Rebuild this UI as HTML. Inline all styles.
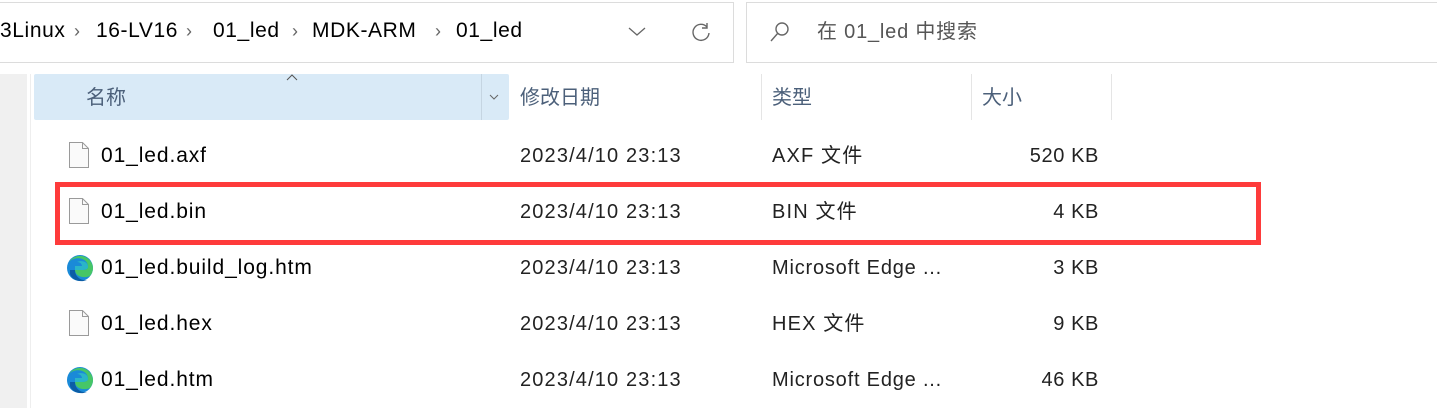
<!DOCTYPE html>
<html><head><meta charset="utf-8"><style>
body{margin:0;width:1437px;height:408px;background:#fff;position:relative;overflow:hidden;font-family:"Liberation Sans","Noto Sans CJK SC",sans-serif;color:#000}
.a{position:absolute}
.t{position:absolute;font-size:20px;line-height:24px;white-space:nowrap;letter-spacing:1px}
.h{color:#4c607a;letter-spacing:0}
.g{color:#222;letter-spacing:1.15px}
.n{font-size:21px;letter-spacing:0.9px}
.b{font-size:21px;top:19px;letter-spacing:0.6px}
.s{color:#666;font-size:18px;top:19px;letter-spacing:0}
</style></head><body>
<div class="a" style="left:-2px;top:2px;width:734px;height:59px;border:1px solid #dcdcdc"></div>
<div class="t b" style="left:0">3Linux</div><div class="t s" style="left:74px">›</div>
<div class="t b" style="left:96px">16-LV16</div><div class="t s" style="left:186px">›</div>
<div class="t b" style="left:213px">01_led</div><div class="t s" style="left:292px">›</div>
<div class="t b" style="left:312px">MDK-ARM</div><div class="t s" style="left:435px">›</div>
<div class="t b" style="left:456px">01_led</div>
<svg class="a" style="left:628px;top:26px" width="18" height="12"><path d="M1 2l8 7 8-7" fill="none" stroke="#666" stroke-width="1.3"/></svg>
<svg class="a" style="left:690px;top:21px" width="22" height="22"><path d="M17 6A8 8 0 1 0 19 12" fill="none" stroke="#666" stroke-width="1.4"/><path d="M17 2v5h-5" fill="none" stroke="#666" stroke-width="1.4"/></svg>
<div class="a" style="left:746px;top:2px;width:700px;height:59px;border:1px solid #dcdcdc"></div>
<svg class="a" style="left:768px;top:20px" width="24" height="24"><circle cx="14" cy="9" r="6" fill="none" stroke="#666" stroke-width="1.4"/><path d="M10 13L3 21" stroke="#666" stroke-width="1.4"/></svg>
<div class="t" style="left:817px;top:20px;color:#555;letter-spacing:0.8px">在 01_led 中搜索</div>
<div class="a" style="left:0;top:74px;width:27px;height:334px;background:#f0f0f0"></div>
<div class="a" style="left:30px;top:74px;width:1px;height:334px;background:#eee"></div>
<div class="a" style="left:34px;top:74px;width:475px;height:46px;background:#d9eaf7;border-radius:2px"></div>
<div class="a" style="left:481px;top:74px;width:1px;height:46px;background:#c5d5e2"></div>
<svg class="a" style="left:286px;top:74px" width="12" height="8"><path d="M1 6l5-5 5 5" fill="none" stroke="#555"/></svg>
<svg class="a" style="left:489px;top:94px" width="10" height="6"><path d="M1 1l4 4 4-4" fill="none" stroke="#666"/></svg>
<div class="a" style="left:761px;top:74px;width:1px;height:46px;background:#e5e5e5"></div>
<div class="a" style="left:971px;top:74px;width:1px;height:46px;background:#e5e5e5"></div>
<div class="a" style="left:1111px;top:74px;width:1px;height:46px;background:#e5e5e5"></div>
<div class="t h" style="left:86px;top:86px">名称</div>
<div class="t h" style="left:520px;top:86px">修改日期</div>
<div class="t h" style="left:772px;top:86px">类型</div>
<div class="t h" style="left:982px;top:86px">大小</div>

<div class="a" style="left:55px;top:182px;width:1196px;height:53px;border:5px solid #fe3b3b"></div>

<svg width="0" height="0" style="position:absolute"><defs>
<symbol id="f" viewBox="0 0 22 28"><path d="M1.5 1.5h13l6 6v19h-19z" fill="#fafafa" stroke="#9a9a9a"/><path d="M14.5 1.5v6h6" fill="none" stroke="#9a9a9a"/></symbol>
<symbol id="e" viewBox="0 0 28 28"><circle cx="14" cy="14" r="13" fill="#1a8ad8"/><path d="M27 14A13 13 0 0 0 3 8C8 2 22 3 22 13c0 2-3 3-6 3H9c0 6 8 9 15 6a13 13 0 0 0 3-8z" fill="#46c667"/><path d="M9 16h7c3 0 6-1 6-3C22 7 15 6 11 8c4 0 5 3 5 4H9z" fill="#2ab5c8"/><path d="M4 20c2 6 10 9 17 6-6 1-12-3-12-10H4z" fill="#0c5da6"/></symbol>
</defs></svg>

<svg class="a" style="left:68px;top:141px" width="22" height="28"><use href="#f"/></svg>
<svg class="a" style="left:68px;top:197px" width="22" height="28"><use href="#f"/></svg>
<svg class="a" style="left:66px;top:254px" width="28" height="28"><use href="#e"/></svg>
<svg class="a" style="left:68px;top:309px" width="22" height="28"><use href="#f"/></svg>
<svg class="a" style="left:66px;top:366px" width="28" height="28"><use href="#e"/></svg>

<div class="t n" style="left:101px;top:144px">01_led.axf</div>
<div class="t n" style="left:101px;top:200px">01_led.bin</div>
<div class="t n" style="left:101px;top:256px">01_led.build_log.htm</div>
<div class="t n" style="left:101px;top:312px">01_led.hex</div>
<div class="t n" style="left:101px;top:368px">01_led.htm</div>

<div class="t g" style="left:520px;top:144px">2023/4/10 23:13</div>
<div class="t g" style="left:520px;top:200px">2023/4/10 23:13</div>
<div class="t g" style="left:520px;top:256px">2023/4/10 23:13</div>
<div class="t g" style="left:520px;top:312px">2023/4/10 23:13</div>
<div class="t g" style="left:520px;top:368px">2023/4/10 23:13</div>

<div class="t g" style="left:772px;top:144px">AXF 文件</div>
<div class="t g" style="left:772px;top:200px">BIN 文件</div>
<div class="t g" style="left:772px;top:256px;letter-spacing:0.8px">Microsoft Edge ...</div>
<div class="t g" style="left:772px;top:312px">HEX 文件</div>
<div class="t g" style="left:772px;top:368px;letter-spacing:0.8px">Microsoft Edge ...</div>

<div class="t g" style="right:338px;top:144px;letter-spacing:0.6px">520 KB</div>
<div class="t g" style="right:338px;top:200px;letter-spacing:0.6px">4 KB</div>
<div class="t g" style="right:338px;top:256px;letter-spacing:0.6px">3 KB</div>
<div class="t g" style="right:338px;top:312px;letter-spacing:0.6px">9 KB</div>
<div class="t g" style="right:338px;top:368px;letter-spacing:0.6px">46 KB</div>
</body></html>
